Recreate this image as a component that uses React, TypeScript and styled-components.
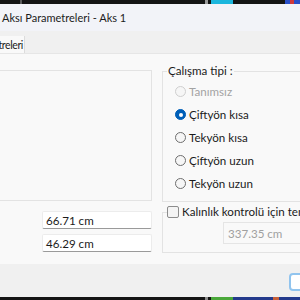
import React, { useState } from 'react'
import styled, { createGlobalStyle } from 'styled-components'

const GlobalStyle = createGlobalStyle`
  html, body {
    margin: 0;
    padding: 0;
    width: 300px;
    height: 300px;
    overflow: hidden;
    background: #1c1c1c;
  }
  * {
    box-sizing: border-box;
  }
`

const Window = styled.div`
  width: 300px;
  height: 300px;
  display: flex;
  flex-direction: column;
  overflow: hidden;
  font-family: Lato, "Noto Sans", sans-serif;
  font-size: 11.6px;
  color: #1b1b1b;
`

const Strip = styled.div<{ $h: number }>`
  height: ${p => p.$h}px;
  flex: none;
  display: flex;
  background: #141414;
`

const Seg = styled.div<{ $w: number; $c: string }>`
  width: ${p => p.$w}px;
  flex: none;
  background: ${p => p.$c};
`

const TitleBar = styled.div`
  height: 27px;
  flex: none;
  display: flex;
  align-items: center;
  padding-left: 2px;
  background: #f2f3f8;
  font-size: 11px;
`

const TabStrip = styled.div`
  height: 22px;
  flex: none;
  display: flex;
  align-items: flex-end;
  background: #f0f0f0;
`

const Tab = styled.div`
  width: 25px;
  height: 17px;
  display: flex;
  justify-content: flex-end;
  align-items: center;
  overflow: hidden;
  white-space: nowrap;
  padding-right: 1px;
  background: #f9f9f9;
  border-right: 1px solid #dcdcdc;
  font-size: 10.5px;
  letter-spacing: -0.4px;
`

const Content = styled.div`
  height: 211px;
  flex: none;
  display: flex;
  flex-direction: column;
  gap: 9px;
  padding-top: 9px;
  background: #f9f9f9;
  border-top: 1px solid #e6e6e6;
  overflow: hidden;
`

const Row = styled.div`
  display: flex;
  gap: 10px;
`

const Group = styled.fieldset<{ $w: number; $h: number; $ml?: number }>`
  width: ${p => p.$w}px;
  height: ${p => p.$h}px;
  margin: 0 0 0 ${p => p.$ml ?? 0}px;
  padding: 0 0 0 12px;
  flex: none;
  border: 1px solid #e3e3e3;
  border-radius: 0;
  display: flex;
  flex-direction: column;
`

const Legend = styled.legend`
  padding: 0 1px;
  margin-left: -8px;
  line-height: 16px;
`

const LeftGroup = styled(Group)`
  justify-content: flex-end;
  padding: 0 0 8px 0;
  margin-top: 7px;
  height: 131px;
`

const CutText = styled.div`
  margin-left: -29px;
  white-space: nowrap;
`

const RadioRow = styled.label<{ $disabled?: boolean }>`
  height: 23px;
  display: flex;
  align-items: center;
  gap: 3px;
  color: ${p => (p.$disabled ? '#a3a3a3' : '#1b1b1b')};
  cursor: ${p => (p.$disabled ? 'default' : 'pointer')};
`

const RadioDot = styled.span<{ $on?: boolean; $disabled?: boolean }>`
  width: 11px;
  height: 11px;
  flex: none;
  border-radius: 50%;
  background: ${p => (p.$on ? '#005fb8' : '#f6f6f6')};
  border: 1px solid ${p => (p.$on ? '#005fb8' : p.$disabled ? '#cfcfcf' : '#6e6e6e')};
  display: flex;
  align-items: center;
  justify-content: center;
  &::after {
    content: '';
    display: ${p => (p.$on ? 'block' : 'none')};
    width: 4px;
    height: 4px;
    border-radius: 50%;
    background: #fff;
  }
`

const Radios = styled.div`
  margin-top: 1px;
  display: flex;
  flex-direction: column;
`

const Inputs = styled.div`
  width: 152px;
  flex: none;
  display: flex;
  flex-direction: column;
  align-items: flex-end;
  gap: 5px;
`

const ValueBox = styled.div`
  width: 110px;
  height: 18px;
  display: flex;
  align-items: center;
  padding-left: 3px;
  background: #fff;
  border: 1px solid #ececec;
  border-bottom-color: #9a9a9a;
  border-radius: 2px;
`

const CheckGroup = styled.fieldset`
  width: 150px;
  height: 48px;
  margin: -6px 0 0 0;
  padding: 0 0 0 60px;
  flex: none;
  border: 1px solid #e3e3e3;
  display: flex;
  flex-direction: column;
`

const CheckLegend = styled.legend`
  display: flex;
  align-items: center;
  gap: 3px;
  margin-left: -56px;
  padding: 0;
  line-height: 14px;
  white-space: nowrap;
`

const CheckBox = styled.span<{ $on: boolean }>`
  width: 12px;
  height: 12px;
  flex: none;
  border-radius: 2px;
  border: 1px solid #8c8c8c;
  background: ${p => (p.$on ? '#005fb8' : '#f4f4f4')};
`

const DisabledBox = styled.div`
  width: 100px;
  height: 22px;
  margin-top: 3px;
  display: flex;
  align-items: center;
  padding-left: 4px;
  color: #a0a0a0;
  border: 1px solid #e5e5e5;
  background: #f9f9f9;
`

const Footer = styled.div`
  height: 33px;
  flex: none;
  display: flex;
  justify-content: flex-end;
  align-items: flex-start;
  padding-top: 9px;
  background: #f0f0f0;
  overflow: hidden;
`

const Button = styled.button`
  width: 76px;
  height: 18px;
  margin-right: -65px;
  flex: none;
  background: #fff;
  border: 2px solid #91c4ee;
  border-radius: 4px;
  font: inherit;
`

const options = ['Tanımsız', 'Çiftyön kısa', 'Tekyön kısa', 'Çiftyön uzun', 'Tekyön uzun']

export default function App() {
  const [mode, setMode] = useState(1)
  const [check, setCheck] = useState(false)

  return (
    <Window>
      <GlobalStyle />
      <Strip $h={4}>
        <Seg $w={20} $c="#141414" />
        <Seg $w={2} $c="#5a5a5a" />
        <Seg $w={183} $c="#141414" />
        <Seg $w={3} $c="#9a9a9a" />
        <Seg $w={3} $c="#141414" />
        <Seg $w={22} $c="#1bb6dd" />
        <Seg $w={52} $c="#141414" />
        <Seg $w={5} $c="#2a4fc8" />
        <Seg $w={4} $c="#d0383a" />
        <Seg $w={6} $c="#2a4fc8" />
      </Strip>
      <TitleBar>Aksı Parametreleri - Aks 1</TitleBar>
      <TabStrip>
        <Tab>Parametreleri</Tab>
      </TabStrip>
      <Content>
        <Row>
          <LeftGroup as="div" $w={160} $h={131} $ml={-8}>
            <CutText>Donatı</CutText>
          </LeftGroup>
          <Group $w={150} $h={139}>
            <Legend>Çalışma tipi :</Legend>
            <Radios>
              {options.map((o, i) => (
                <RadioRow key={o} $disabled={i === 0} onClick={() => i > 0 && setMode(i)}>
                  <RadioDot $on={mode === i} $disabled={i === 0} />
                  {o}
                </RadioRow>
              ))}
            </Radios>
          </Group>
        </Row>
        <Row>
          <Inputs>
            <ValueBox>66.71 cm</ValueBox>
            <ValueBox>46.29 cm</ValueBox>
          </Inputs>
          <CheckGroup>
            <CheckLegend onClick={() => setCheck(!check)}>
              <CheckBox $on={check} />
              Kalınlık kontrolü için temiz açıklık
            </CheckLegend>
            <DisabledBox>337.35 cm</DisabledBox>
          </CheckGroup>
        </Row>
      </Content>
      <Footer>
        <Button>Tamam</Button>
      </Footer>
      <Strip $h={3}>
        <Seg $w={205} $c="#141414" />
        <Seg $w={3} $c="#8a8a8a" />
        <Seg $w={3} $c="#141414" />
        <Seg $w={22} $c="#4aa83a" />
        <Seg $w={40} $c="#243a8c" />
        <Seg $w={6} $c="#c8603a" />
        <Seg $w={21} $c="#243a8c" />
      </Strip>
    </Window>
  )
}
